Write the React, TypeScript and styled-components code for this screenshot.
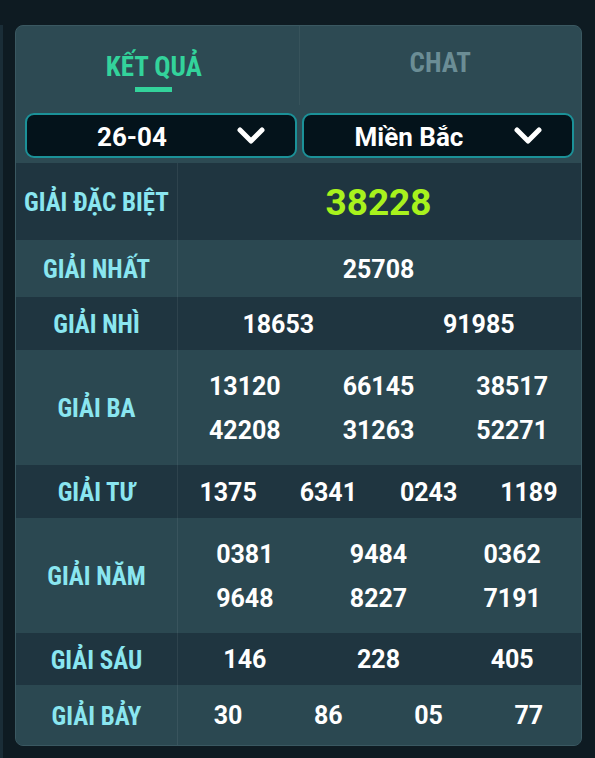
import React from "react";
import styled, { createGlobalStyle } from "styled-components";

const GlobalStyle = createGlobalStyle`
	html, body {
		margin: 0;
		padding: 0;
		background: #0e1b22;
	}
	body {
		font-family: Roboto, "Liberation Sans", sans-serif;
	}
`;

const COND = `"Roboto Condensed", "Liberation Sans Narrow", "DejaVu Sans Condensed", Roboto, sans-serif`;

const Page = styled.div`
	display: flex;
	align-items: flex-start;
	padding-top: 25px;
	height: 733px;
`;

const Edge = styled.div`
	width: 3px;
	align-self: stretch;
	background: #1a2d37;
	margin-right: 12px;
`;

const Panel = styled.div`
	width: 565px;
	background: #2d4a53;
	border: 1px solid #3a5861;
	border-radius: 8px;
	overflow: hidden;
`;

const Tabs = styled.div`
	display: grid;
	grid-template-columns: 1fr 1fr;
	height: 79px;
`;

const Tab = styled.div<{ $active?: boolean }>`
	display: flex;
	flex-direction: column;
	align-items: center;
	padding-top: ${(p) => (p.$active ? "27px" : "23px")};
	padding-right: ${(p) => (p.$active ? "7px" : "0")};
	font-family: ${COND};
	font-weight: 700;
	font-size: 27px;
	line-height: 28px;
	color: ${(p) => (p.$active ? "#33d39b" : "#6b8d95")};
	& + & {
		border-left: 1px solid rgba(255, 255, 255, 0.05);
	}
`;

const Underline = styled.div`
	width: 37px;
	height: 5px;
	margin-top: 6px;
	background: #33d39b;
`;

const Selects = styled.div`
	display: grid;
	grid-template-columns: 1fr 1fr;
	gap: 5px;
	padding: 8px 7px 5px 9px;
`;

const Select = styled.div`
	display: flex;
	align-items: center;
	height: 41px;
	border: 2px solid #1b9198;
	border-radius: 9px;
	background: #04131b;
	padding-right: 30px;
`;

const SelectText = styled.span`
	flex: 1;
	text-align: center;
	padding-top: 3px;
	color: #ffffff;
	font-family: Roboto, "Liberation Sans", sans-serif;
	font-weight: 700;
	font-size: 26px;
`;

const Row = styled.div<{ $dark?: boolean; $h: number }>`
	display: flex;
	height: ${(p) => p.$h}px;
	background: ${(p) => (p.$dark ? "#1f3540" : "#2b4851")};
`;

const Label = styled.div`
	width: 161px;
	flex-shrink: 0;
	display: flex;
	align-items: center;
	justify-content: center;
	padding-top: 2px;
	border-right: 1px solid rgba(255, 255, 255, 0.07);
	font-family: ${COND};
	font-weight: 700;
	font-size: 25px;
	color: #8ae6f0;
	white-space: nowrap;
`;

const Values = styled.div<{ $cols: number }>`
	flex: 1;
	display: grid;
	grid-template-columns: repeat(${(p) => p.$cols}, 1fr);
	align-content: center;
	row-gap: 14px;
	padding: 2px 2px 0 0;
`;

const Num = styled.span<{ $special?: boolean }>`
	text-align: center;
	font-family: Roboto, "Liberation Sans", sans-serif;
	font-weight: 700;
	font-size: ${(p) => (p.$special ? "37px" : "25px")};
	line-height: 30px;
	color: ${(p) => (p.$special ? "#a8f21d" : "#ffffff")};
`;

const Chevron = () => (
	<svg width="28" height="18" viewBox="0 0 28 18">
		<path
			d="M3 3 L14 14 L25 3"
			fill="none"
			stroke="#ffffff"
			strokeWidth="5"
			strokeLinecap="round"
			strokeLinejoin="round"
		/>
	</svg>
);

interface IPrize {
	name: string;
	cols: number;
	h: number;
	nums: string[];
	special?: boolean;
}

const prizes: IPrize[] = [
	{ name: "GIẢI ĐẶC BIỆT", cols: 1, h: 77, nums: ["38228"], special: true },
	{ name: "GIẢI NHẤT", cols: 1, h: 57, nums: ["25708"] },
	{ name: "GIẢI NHÌ", cols: 2, h: 53, nums: ["18653", "91985"] },
	{
		name: "GIẢI BA",
		cols: 3,
		h: 115,
		nums: ["13120", "66145", "38517", "42208", "31263", "52271"],
	},
	{ name: "GIẢI TƯ", cols: 4, h: 53, nums: ["1375", "6341", "0243", "1189"] },
	{
		name: "GIẢI NĂM",
		cols: 3,
		h: 115,
		nums: ["0381", "9484", "0362", "9648", "8227", "7191"],
	},
	{ name: "GIẢI SÁU", cols: 3, h: 52, nums: ["146", "228", "405"] },
	{ name: "GIẢI BẢY", cols: 4, h: 60, nums: ["30", "86", "05", "77"] },
];

const App = () => {
	return (
		<>
			<GlobalStyle />
			<Page>
				<Edge />
				<Panel>
					<Tabs>
						<Tab $active>
							KẾT QUẢ
							<Underline />
						</Tab>
						<Tab>CHAT</Tab>
					</Tabs>
					<Selects>
						<Select>
							<SelectText>26-04</SelectText>
							<Chevron />
						</Select>
						<Select>
							<SelectText>Miền Bắc</SelectText>
							<Chevron />
						</Select>
					</Selects>
					{prizes.map((prize, i) => (
						<Row key={prize.name} $dark={i % 2 === 0} $h={prize.h}>
							<Label>{prize.name}</Label>
							<Values $cols={prize.cols}>
								{prize.nums.map((n, j) => (
									<Num key={j} $special={prize.special}>
										{n}
									</Num>
								))}
							</Values>
						</Row>
					))}
				</Panel>
			</Page>
		</>
	);
};

export default App;
